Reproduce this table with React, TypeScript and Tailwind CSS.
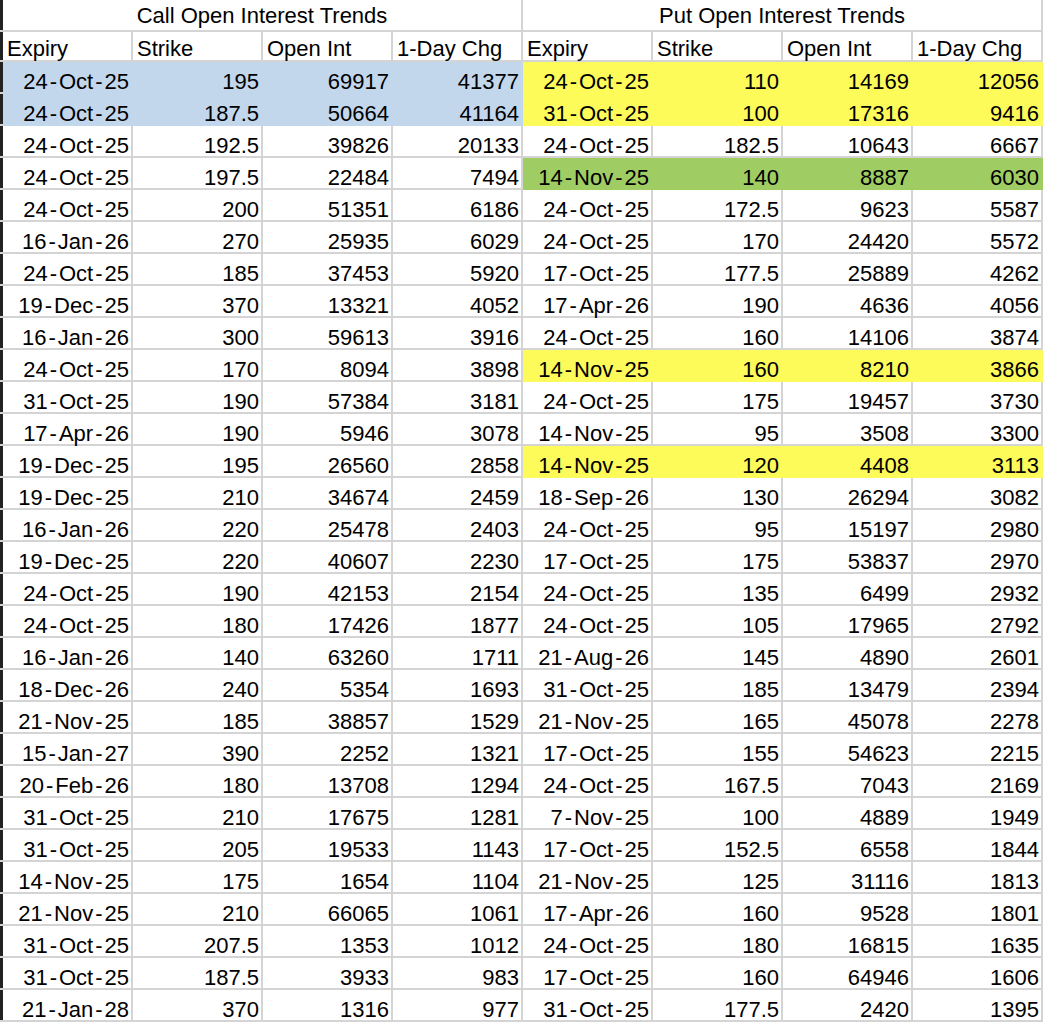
import React from "react";

type Row = [string, string, string, string];

const calls: Row[] = [
  ["24-Oct-25", "195", "69917", "41377"],
  ["24-Oct-25", "187.5", "50664", "41164"],
  ["24-Oct-25", "192.5", "39826", "20133"],
  ["24-Oct-25", "197.5", "22484", "7494"],
  ["24-Oct-25", "200", "51351", "6186"],
  ["16-Jan-26", "270", "25935", "6029"],
  ["24-Oct-25", "185", "37453", "5920"],
  ["19-Dec-25", "370", "13321", "4052"],
  ["16-Jan-26", "300", "59613", "3916"],
  ["24-Oct-25", "170", "8094", "3898"],
  ["31-Oct-25", "190", "57384", "3181"],
  ["17-Apr-26", "190", "5946", "3078"],
  ["19-Dec-25", "195", "26560", "2858"],
  ["19-Dec-25", "210", "34674", "2459"],
  ["16-Jan-26", "220", "25478", "2403"],
  ["19-Dec-25", "220", "40607", "2230"],
  ["24-Oct-25", "190", "42153", "2154"],
  ["24-Oct-25", "180", "17426", "1877"],
  ["16-Jan-26", "140", "63260", "1711"],
  ["18-Dec-26", "240", "5354", "1693"],
  ["21-Nov-25", "185", "38857", "1529"],
  ["15-Jan-27", "390", "2252", "1321"],
  ["20-Feb-26", "180", "13708", "1294"],
  ["31-Oct-25", "210", "17675", "1281"],
  ["31-Oct-25", "205", "19533", "1143"],
  ["14-Nov-25", "175", "1654", "1104"],
  ["21-Nov-25", "210", "66065", "1061"],
  ["31-Oct-25", "207.5", "1353", "1012"],
  ["31-Oct-25", "187.5", "3933", "983"],
  ["21-Jan-28", "370", "1316", "977"],
];

const puts: Row[] = [
  ["24-Oct-25", "110", "14169", "12056"],
  ["31-Oct-25", "100", "17316", "9416"],
  ["24-Oct-25", "182.5", "10643", "6667"],
  ["14-Nov-25", "140", "8887", "6030"],
  ["24-Oct-25", "172.5", "9623", "5587"],
  ["24-Oct-25", "170", "24420", "5572"],
  ["17-Oct-25", "177.5", "25889", "4262"],
  ["17-Apr-26", "190", "4636", "4056"],
  ["24-Oct-25", "160", "14106", "3874"],
  ["14-Nov-25", "160", "8210", "3866"],
  ["24-Oct-25", "175", "19457", "3730"],
  ["14-Nov-25", "95", "3508", "3300"],
  ["14-Nov-25", "120", "4408", "3113"],
  ["18-Sep-26", "130", "26294", "3082"],
  ["24-Oct-25", "95", "15197", "2980"],
  ["17-Oct-25", "175", "53837", "2970"],
  ["24-Oct-25", "135", "6499", "2932"],
  ["24-Oct-25", "105", "17965", "2792"],
  ["21-Aug-26", "145", "4890", "2601"],
  ["31-Oct-25", "185", "13479", "2394"],
  ["21-Nov-25", "165", "45078", "2278"],
  ["17-Oct-25", "155", "54623", "2215"],
  ["24-Oct-25", "167.5", "7043", "2169"],
  ["7-Nov-25", "100", "4889", "1949"],
  ["17-Oct-25", "152.5", "6558", "1844"],
  ["21-Nov-25", "125", "31116", "1813"],
  ["17-Apr-26", "160", "9528", "1801"],
  ["24-Oct-25", "180", "16815", "1635"],
  ["17-Oct-25", "160", "64946", "1606"],
  ["31-Oct-25", "177.5", "2420", "1395"],
];

type Fill = "none" | "blue" | "yellow" | "green";

const callFill = (i: number): Fill => (i < 2 ? "blue" : "none");
const putFill = (i: number): Fill => {
  if (i === 3) return "green";
  if (i === 0 || i === 1 || i === 9 || i === 12) return "yellow";
  return "none";
};

const fillClass: Record<Fill, string> = {
  none: "bg-white border-[#d4d4d4]",
  blue: "bg-[#c2d6ec] border-[#c2d6ec]",
  yellow: "bg-[#fdfb5a] border-[#fdfb5a]",
  green: "bg-[#a0cd63] border-[#a0cd63]",
};

function DateText({ v }: { v: string }) {
  const parts = v.split("-");
  return (
    <span>
      {parts.map((p, i) => (
        <React.Fragment key={i}>
          {i > 0 && <span className="mx-[2px]">-</span>}
          {p}
        </React.Fragment>
      ))}
    </span>
  );
}

function Cell({
  children,
  fill = "none",
  align = "right",
  h = "h-[32px]",
}: {
  children: React.ReactNode;
  fill?: Fill;
  align?: "left" | "right";
  h?: string;
}) {
  return (
    <div
      className={
        "w-[130px] shrink-0 border-r-2 border-b-2 flex items-end whitespace-nowrap " +
        h +
        " " +
        fillClass[fill] +
        " " +
        (align === "right" ? "justify-end pr-[2px]" : "justify-start pl-[4px] pb-[1px]")
      }
    >
      {children}
    </div>
  );
}

function Strip({ h }: { h: string }) {
  return <div className={"w-[3px] shrink-0 bg-[#222] border-b-2 border-[#d4d4d4] " + h} />;
}

export default function App() {
  const headers = ["Expiry", "Strike", "Open Int", "1-Day Chg"];
  return (
    <div
      className="w-[1044px] h-[1026px] bg-white overflow-hidden text-black text-[22px] leading-[20px]"
      style={{ fontFamily: '"Liberation Sans", Arial, sans-serif' }}
    >
      <div className="flex">
        <Strip h="h-[32px]" />
        <div className="w-[520px] h-[32px] shrink-0 border-r-2 border-b-2 border-[#d4d4d4] flex items-end justify-center pb-[4px]">
          Call Open Interest Trends
        </div>
        <div className="w-[520px] h-[32px] shrink-0 border-r-2 border-b-2 border-[#d4d4d4] flex items-end justify-center pb-[4px]">
          Put Open Interest Trends
        </div>
      </div>
      <div className="flex">
        <Strip h="h-[30px]" />
        {[...headers, ...headers].map((t, i) => (
          <Cell key={i} align="left" h="h-[30px]">
            {t}
          </Cell>
        ))}
      </div>
      {calls.map((c, i) => {
        const p = puts[i];
        const cf = callFill(i);
        const pf = putFill(i);
        return (
          <div className="flex" key={i}>
            <Strip h="h-[32px]" />
            <Cell fill={cf}>
              <DateText v={c[0]} />
            </Cell>
            <Cell fill={cf}>{c[1]}</Cell>
            <Cell fill={cf}>{c[2]}</Cell>
            <Cell fill={cf}>{c[3]}</Cell>
            <Cell fill={pf}>
              <DateText v={p[0]} />
            </Cell>
            <Cell fill={pf}>{p[1]}</Cell>
            <Cell fill={pf}>{p[2]}</Cell>
            <Cell fill={pf}>{p[3]}</Cell>
          </div>
        );
      })}
    </div>
  );
}
